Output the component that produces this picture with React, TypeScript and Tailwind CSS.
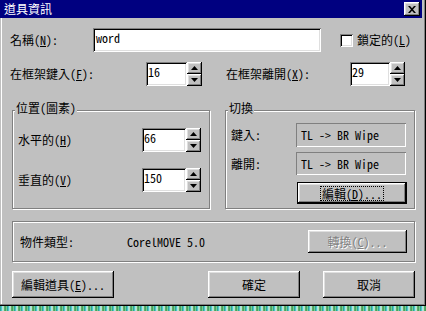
import React from "react";

const raised =
  "shadow-[inset_-1px_-1px_#000,inset_1px_1px_#fff,inset_-2px_-2px_#808080,inset_2px_2px_#dfdfdf]";
const sunken =
  "shadow-[inset_1px_1px_#808080,inset_-1px_-1px_#fff,inset_2px_2px_#000,inset_-2px_-2px_#dfdfdf]";
const etched = "border border-[#808080] shadow-[inset_1px_1px_#fff,1px_1px_#fff]";
const staticEdge = "shadow-[inset_1px_1px_#808080,inset_-1px_-1px_#fff]";

function U({ c }: { c: string }) {
  return <span className="underline underline-offset-[1px] decoration-1">{c}</span>;
}

function Spin({ value, w }: { value: string; w: string }) {
  return (
    <div className="flex h-[24px]">
      <div className={`${sunken} ${w} h-[24px] bg-white pl-[2px] pt-[3px] leading-[14px]`}>{value}</div>
      <div className="flex flex-col w-[15px] h-[24px]">
        <div className={`${raised} h-[12px] bg-[#c0c0c0] flex items-center justify-center`}>
          <svg width="7" height="4" viewBox="0 0 7 4">
            <path d="M3.5 0 L7 4 L0 4 Z" fill="#000" />
          </svg>
        </div>
        <div className={`${raised} h-[12px] bg-[#c0c0c0] flex items-center justify-center`}>
          <svg width="7" height="4" viewBox="0 0 7 4">
            <path d="M0 0 L7 0 L3.5 4 Z" fill="#000" />
          </svg>
        </div>
      </div>
    </div>
  );
}

export default function App() {
  return (
    <div className="w-[426px] h-[311px] bg-[repeating-linear-gradient(90deg,#1a9a7a_0px,#5fd0e0_2px,#e8fff0_3px,#2f8f3f_5px,#8fe0b0_7px)] text-[12px] text-black font-[family-name:'Noto_Sans_Mono_CJK_TC','Noto_Sans_CJK_TC',sans-serif]">
      <div className="w-[426px] h-[306px] bg-[#c0c0c0] flex flex-col shadow-[inset_-1px_-1px_#000,inset_-2px_-2px_#808080,inset_1px_0_#c0c0c0,inset_2px_0_#fff]">
        {/* Title bar */}
        <div className="h-[18px] mr-[4px] bg-[#000080] flex items-center justify-between pl-[4px] pr-[2px]">
          <span className="text-white leading-[14px]">道具資訊</span>
          <div className={`${raised} w-[16px] h-[14px] bg-[#c0c0c0] flex items-center justify-center`}>
            <svg width="8" height="7" viewBox="0 0 8 7">
              <path d="M0 0 L2 0 L4 2.2 L6 0 L8 0 L5 3.5 L8 7 L6 7 L4 4.8 L2 7 L0 7 L3 3.5 Z" fill="#000" />
            </svg>
          </div>
        </div>

        {/* Row 1 */}
        <div className="flex items-center mt-[10px] pl-[10px]">
          <div className="w-[83px]">
            名稱(<U c="N" />):
          </div>
          <div className={`${sunken} w-[228px] h-[24px] bg-white pl-[3px] pt-[3px] leading-[14px]`}>word</div>
          <div className={`${sunken} ml-[19px] w-[13px] h-[13px] bg-white`} />
          <div className="ml-[4px]">
            鎖定的(<U c="L" />)
          </div>
        </div>

        {/* Row 2 */}
        <div className="flex items-center mt-[10px] pl-[10px]">
          <div className="w-[136px]">
            在框架鍵入(<U c="F" />):
          </div>
          <Spin value="16" w="w-[41px]" />
          <div className="ml-[24px] w-[124px]">
            在框架離開(<U c="X" />):
          </div>
          <Spin value="29" w="w-[40px]" />
        </div>

        {/* Groups */}
        <div className="flex mt-[24px] pl-[12px] gap-[15px]">
          <div className={`${etched} w-[198px] h-[99px] flex flex-col`}>
            <div className="-mt-[11px] ml-[2px] w-fit px-[1px] bg-[#c0c0c0] h-[16px] leading-[16px]">位置(圖素)</div>
            <div className="flex items-center mt-[12px] pl-[5px]">
              <div className="w-[124px]">
                水平的(<U c="H" />)
              </div>
              <Spin value="66" w="w-[44px]" />
            </div>
            <div className="flex items-center mt-[16px] pl-[5px]">
              <div className="w-[124px]">
                垂直的(<U c="V" />)
              </div>
              <Spin value="150" w="w-[44px]" />
            </div>
          </div>

          <div className={`${etched} w-[190px] h-[99px] flex flex-col`}>
            <div className="-mt-[11px] ml-[2px] w-fit px-[1px] bg-[#c0c0c0] h-[16px] leading-[16px]">切換</div>
            <div className="flex items-center mt-[7px] pl-[5px]">
              <div className="w-[65px]">鍵入:</div>
              <div className={`${staticEdge} w-[110px] h-[24px] flex items-center pl-[5px]`}>TL -&gt; BR Wipe</div>
            </div>
            <div className="flex items-center mt-[5px] pl-[5px]">
              <div className="w-[65px]">離開:</div>
              <div className={`${staticEdge} w-[110px] h-[23px] flex items-center pl-[5px]`}>TL -&gt; BR Wipe</div>
            </div>
            <div className="mt-[7px] pl-[71px]">
              <div className="w-[110px] h-[22px] border border-black">
                <div className={`${raised} w-full h-full flex items-center justify-center`}>
                  <span className="border border-dotted border-black px-[1px] leading-[13px]">
                    編輯(<U c="D" />)...
                  </span>
                </div>
              </div>
            </div>
          </div>
        </div>

        {/* Object type group */}
        <div className={`${etched} mt-[12px] ml-[12px] w-[403px] h-[41px] flex items-center pl-[7px] pr-[7px]`}>
          <div className="w-[107px]">物件類型:</div>
          <div>CorelMOVE 5.0</div>
          <div className={`${raised} ml-auto w-[99px] h-[23px] flex items-center justify-center text-[#808080] [text-shadow:1px_1px_#fff]`}>
            轉換(<U c="C" />)...
          </div>
        </div>

        {/* Bottom buttons */}
        <div className="flex mt-[9px] pl-[12px]">
          <div className={`${raised} w-[102px] h-[27px] flex items-center justify-center`}>
            編輯道具(<U c="E" />)...
          </div>
          <div className={`${raised} ml-[94px] w-[92px] h-[27px] flex items-center justify-center`}>確定</div>
          <div className={`${raised} ml-[23px] w-[92px] h-[27px] flex items-center justify-center`}>取消</div>
        </div>
      </div>
    </div>
  );
}
